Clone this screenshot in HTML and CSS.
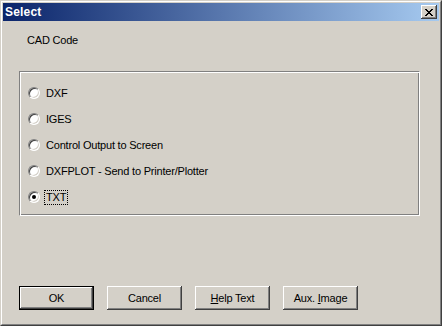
FILE: index.html
```html
<!DOCTYPE html>
<html lang="en">
<head>
    <meta charset="UTF-8">
    <meta name="viewport" content="width=device-width, initial-scale=1.0">
    <title>Select</title>
    <link rel="stylesheet" href="styles.css">
</head>
<body>

    <div class="window">
        <div class="frame">
            <div class="title-bar">
                <span class="title">Select</span>
                <button class="close-btn" aria-label="Close">
                    <svg width="8" height="7" viewBox="0 0 8 7">
                        <path d="M0 0h2v1h-2zM6 0h2v1h-2zM1 1h2v1h-2zM5 1h2v1h-2zM2 2h4v1h-4zM3 3h2v1h-2zM2 4h4v1h-4zM1 5h2v1h-2zM5 5h2v1h-2zM0 6h2v1h-2zM6 6h2v1h-2z" fill="#000"/>
                    </svg>
                </button>
            </div>

            <div class="content">
                <div class="label">CAD Code</div>

                <div class="group-box">
                    <div class="radio-row"><span class="radio"></span><span class="radio-text">DXF</span></div>
                    <div class="radio-row"><span class="radio"></span><span class="radio-text">IGES</span></div>
                    <div class="radio-row"><span class="radio"></span><span class="radio-text">Control Output to Screen</span></div>
                    <div class="radio-row"><span class="radio"></span><span class="radio-text">DXFPLOT - Send to Printer/Plotter</span></div>
                    <div class="radio-row"><span class="radio checked"></span><span class="radio-text focused">TXT</span></div>
                </div>

                <div class="buttons">
                    <button class="btn default"><span class="btn-inner">OK</span></button>
                    <button class="btn"><span class="btn-inner">Cancel</span></button>
                    <button class="btn"><span class="btn-inner"><u>H</u>elp Text</span></button>
                    <button class="btn"><span class="btn-inner">Aux. <u>I</u>mage</span></button>
                </div>
            </div>
        </div>
    </div>

</body>
</html>
```

FILE: styles.css
```css
body {
    margin: 0;
    background: #d4d0c8;
    font-family: "Liberation Sans", Arial, sans-serif;
    font-size: 11px;
    letter-spacing: -0.2px;
    color: #000;
}
.window {
    width: 442px;
    height: 326px;
    box-sizing: border-box;
    border: 1px solid;
    border-color: #d4d0c8 #404040 #404040 #d4d0c8;
    background: #d4d0c8;
}
.frame {
    height: 100%;
    box-sizing: border-box;
    border: 1px solid;
    border-color: #fff #808080 #808080 #fff;
    padding: 1px;
}
.title-bar {
    height: 18px;
    display: flex;
    align-items: center;
    justify-content: space-between;
    padding: 0 2px 0 2px;
    background: linear-gradient(to right, #0a246a, #a6caf0);
}
.title {
    color: #fff;
    font-weight: bold;
    font-size: 12px;
    letter-spacing: 0.2px;
}
.close-btn {
    width: 16px;
    height: 14px;
    padding: 0;
    display: flex;
    align-items: center;
    justify-content: center;
    background: #d4d0c8;
    border: none;
    box-shadow: inset -1px -1px #404040, inset 1px 1px #fff, inset -2px -2px #808080;
}
.content {
    padding: 0 0 0 16px;
}
.label {
    margin: 13px 0 0 8px;
    line-height: 13px;
}
.group-box {
    margin-top: 24px;
    width: 401px;
    height: 145px;
    box-sizing: border-box;
    border: 1px solid;
    border-color: #808080 #fff #fff #808080;
    box-shadow: inset 1px 1px #fff, inset -1px -1px #808080;
    padding: 15px 0 0 8px;
    display: flex;
    flex-direction: column;
    gap: 14px;
}
.radio-row {
    display: flex;
    align-items: center;
    height: 12px;
}
.radio {
    width: 12px;
    height: 12px;
    box-sizing: border-box;
    border-radius: 50%;
    border: 1px solid;
    border-color: #808080 #fff #fff #808080;
    background: #fff;
    box-shadow: inset 1px 1px #404040, inset -1px -1px #d4d0c8;
    position: relative;
    flex-shrink: 0;
}
.radio.checked::after {
    content: "";
    position: absolute;
    left: 3px;
    top: 3px;
    width: 4px;
    height: 4px;
    border-radius: 50%;
    background: #000;
}
.radio-text {
    margin-left: 6px;
    line-height: 13px;
    white-space: nowrap;
}
.radio-text.focused {
    outline: 1px dotted #000;
    outline-offset: 0;
    padding: 0 1px;
    margin-left: 5px;
}
.buttons {
    margin-top: 70px;
    display: flex;
    gap: 13px;
}
.btn {
    width: 75px;
    height: 24px;
    padding: 0;
    border: none;
    background: #d4d0c8;
    font-family: "Liberation Sans", Arial, sans-serif;
    font-size: 11px;
    letter-spacing: -0.2px;
    color: #000;
    box-shadow: inset -1px -1px #404040, inset 1px 1px #fff, inset -2px -2px #808080;
}
.btn.default {
    border: 1px solid #000;
}
.btn-inner u {
    text-decoration: underline;
}
```
